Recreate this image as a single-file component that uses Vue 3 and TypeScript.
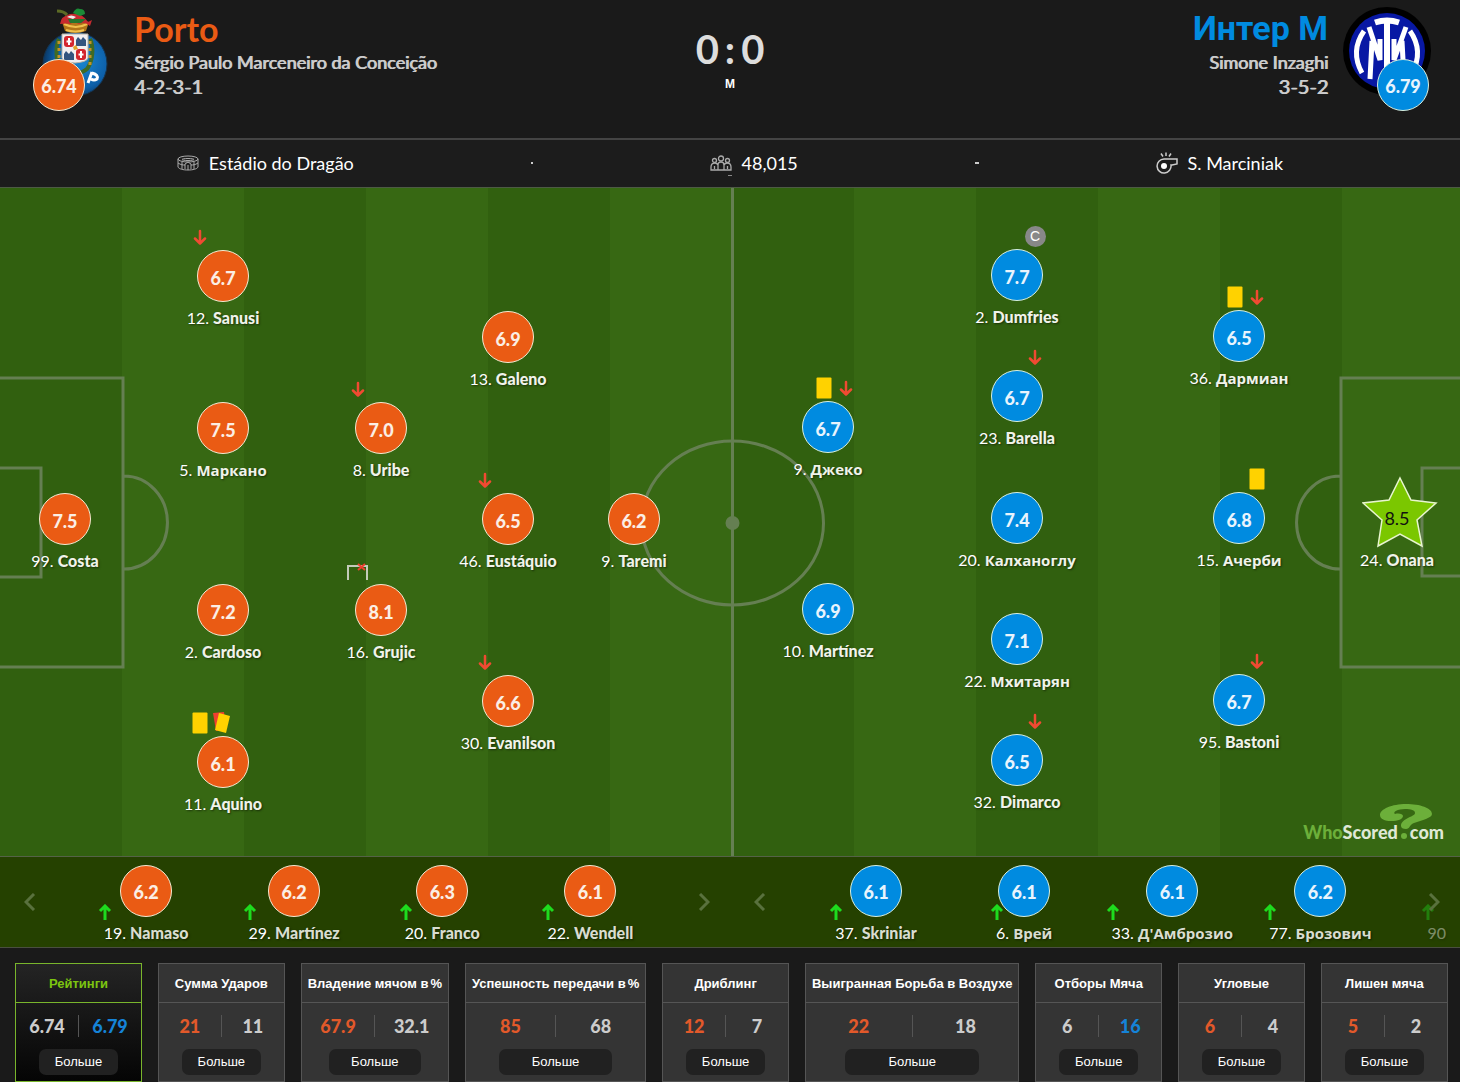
<script setup lang="ts">
type Side = 'home' | 'away'
type Badge = 'off' | 'yellow' | 'second' | 'miss' | 'captain'

interface Player {
  side: Side
  x: number
  y: number
  rating: string
  number: number
  name: string
  badges?: Badge[]
  best?: boolean
}

interface Sub {
  rating: string
  number: number
  name: string
}

interface Bench {
  side: Side
  subs: Sub[]
  nextNumber?: number
}

interface Stat {
  title: string
  percent?: boolean
  home: string
  away: string
}

const PITCH_W = 1460
const PITCH_H = 668

const players: Player[] = [
  { side: 'home', x: 65, y: 331, rating: '7.5', number: 99, name: 'Costa' },
  { side: 'home', x: 223, y: 88, rating: '6.7', number: 12, name: 'Sanusi', badges: ['off'] },
  { side: 'home', x: 223, y: 240, rating: '7.5', number: 5, name: 'Маркано' },
  { side: 'home', x: 223, y: 422, rating: '7.2', number: 2, name: 'Cardoso' },
  { side: 'home', x: 223, y: 574, rating: '6.1', number: 11, name: 'Aquino', badges: ['yellow', 'second'] },
  { side: 'home', x: 381, y: 240, rating: '7.0', number: 8, name: 'Uribe', badges: ['off'] },
  { side: 'home', x: 381, y: 422, rating: '8.1', number: 16, name: 'Grujic', badges: ['miss'] },
  { side: 'home', x: 508, y: 149, rating: '6.9', number: 13, name: 'Galeno' },
  { side: 'home', x: 508, y: 331, rating: '6.5', number: 46, name: 'Eustáquio', badges: ['off'] },
  { side: 'home', x: 508, y: 513, rating: '6.6', number: 30, name: 'Evanilson', badges: ['off'] },
  { side: 'home', x: 634, y: 331, rating: '6.2', number: 9, name: 'Taremi' },
  { side: 'away', x: 828, y: 239, rating: '6.7', number: 9, name: 'Джеко', badges: ['yellow', 'off'] },
  { side: 'away', x: 828, y: 421, rating: '6.9', number: 10, name: 'Martínez' },
  { side: 'away', x: 1017, y: 87, rating: '7.7', number: 2, name: 'Dumfries', badges: ['captain'] },
  { side: 'away', x: 1017, y: 208, rating: '6.7', number: 23, name: 'Barella', badges: ['off'] },
  { side: 'away', x: 1017, y: 330, rating: '7.4', number: 20, name: 'Калханоглу' },
  { side: 'away', x: 1017, y: 451, rating: '7.1', number: 22, name: 'Мхитарян' },
  { side: 'away', x: 1017, y: 572, rating: '6.5', number: 32, name: 'Dimarco', badges: ['off'] },
  { side: 'away', x: 1239, y: 148, rating: '6.5', number: 36, name: 'Дармиан', badges: ['yellow', 'off'] },
  { side: 'away', x: 1239, y: 330, rating: '6.8', number: 15, name: 'Ачерби', badges: ['yellow'] },
  { side: 'away', x: 1239, y: 512, rating: '6.7', number: 95, name: 'Bastoni', badges: ['off'] },
  { side: 'away', x: 1397, y: 330, rating: '8.5', number: 24, name: 'Onana', best: true },
]

const benches: Bench[] = [
  {
    side: 'home',
    subs: [
      { rating: '6.2', number: 19, name: 'Namaso' },
      { rating: '6.2', number: 29, name: 'Martínez' },
      { rating: '6.3', number: 20, name: 'Franco' },
      { rating: '6.1', number: 22, name: 'Wendell' },
    ],
  },
  {
    side: 'away',
    subs: [
      { rating: '6.1', number: 37, name: 'Skriniar' },
      { rating: '6.1', number: 6, name: 'Врей' },
      { rating: '6.1', number: 33, name: "Д'Амброзио" },
      { rating: '6.2', number: 77, name: 'Брозович' },
    ],
    nextNumber: 90,
  },
]

const stats: Stat[] = [
  { title: 'Рейтинги', home: '6.74', away: '6.79' },
  { title: 'Сумма Ударов', home: '21', away: '11' },
  { title: 'Владение мячом в', percent: true, home: '67.9', away: '32.1' },
  { title: 'Успешность передачи в', percent: true, home: '85', away: '68' },
  { title: 'Дриблинг', home: '12', away: '7' },
  { title: 'Выигранная Борьба в Воздухе', home: '22', away: '18' },
  { title: 'Отборы Мяча', home: '6', away: '16' },
  { title: 'Угловые', home: '6', away: '4' },
  { title: 'Лишен мяча', home: '5', away: '2' },
]

const place = (p: Player) => ({
  left: `${(p.x / PITCH_W) * 100}%`,
  top: `${(p.y / PITCH_H) * 100}%`,
})

const isCyrillic = (s: string) => /[А-я]/.test(s)
</script>

<template>
  <div class="match">
    <header class="teams">
      <div class="team home">
        <div class="crest">
          <svg width="90" height="92" viewBox="0 0 90 92" aria-label="FC Porto">
            <defs>
              <radialGradient id="ball" cx="60%" cy="45%" r="60%">
                <stop offset="0" stop-color="#1a86cf" />
                <stop offset="0.7" stop-color="#0d5fa8" />
                <stop offset="1" stop-color="#0a3560" />
              </radialGradient>
            </defs>
            <circle cx="52" cy="57" r="32" fill="url(#ball)" stroke="#15344f" />
            <path d="M36 32c-4 8-3 22 1 30M67 32c4 8 3 22-3 30q-6 5-11 3" fill="none" stroke="#3f6a24" stroke-width="4" />
            <path d="M36 34v26M67 34v24" stroke="#c29328" stroke-width="3" stroke-dasharray="3 4" fill="none" />
            <path d="M39 27h26v24q-1 4-13 5-12-1-13-5z" fill="#f1eff0" stroke="#b9b2a6" />
            <rect x="41" y="29" width="10" height="11" rx="3" fill="#d3262e" />
            <rect x="53" y="42" width="10" height="11" rx="3" fill="#d3262e" />
            <path d="M46 31v7M43.500 34.500h5M58 44v7M55.500 47.500h5" stroke="#fff" stroke-width="2" />
            <path d="M53 39v-6l2-3 3 3 2-3 3 3v6zM41 53v-6l2-3 3 3 2-3 3 3v6z" fill="#33547f" />
            <path d="M50 40l3-2 2 4-4 1z" fill="#e0a326" />
            <path d="M39 15q13-5 27 0l-3 9q-11 4-21 0z" fill="#b27519" />
            <path d="M41 17q12 6 23 0M43 23q10 3 18 0" stroke="#f0c04d" stroke-width="2" fill="none" />
            <path d="M37 17q1-8 10-10 12-2 18 8l4-2-2 6q-5-5-11-2-5-3-9 0-4-1-10 0z" fill="#c62a2f" />
            <path d="M45 12h18l-5 4H47z" fill="#24752f" />
            <path d="M44 10q4-3 9 0l-3 2z" fill="#eee" />
            <path d="M34 4q7 0 10 4" stroke="#5c6a25" stroke-width="3" fill="none" />
            <path d="M50 6q3-6 7-4 5 0 5 5l-5 2z" fill="#1b8c37" />
            <path d="M65 76l4-11M69 66q7 2 5 6-3 2-6 0" stroke="#fff" stroke-width="3" fill="none" />
          </svg>
          <span class="disc home">6.74</span>
        </div>
        <div class="who">
          <h1>Porto</h1>
          <p>Sérgio Paulo Marceneiro da Conceição</p>
          <p class="formation">4-2-3-1</p>
        </div>
      </div>
      <div class="score">
        <strong>0<i>:</i>0</strong>
        <small>М</small>
      </div>
      <div class="team away">
        <div class="who">
          <h1>Интер М</h1>
          <p>Simone Inzaghi</p>
          <p class="formation">3-5-2</p>
        </div>
        <div class="crest">
          <svg width="90" height="92" viewBox="0 0 90 92" aria-label="Inter">
            <circle cx="45" cy="44" r="44" fill="#000" />
            <circle cx="45" cy="44" r="38" fill="#0818a4" />
            <g fill="none" stroke="#fff">
              <path d="M22 24q-14 20-2 42" stroke-width="5" />
              <path d="M68 24q14 20 2 42" stroke-width="5" />
              <path d="M33 15.500q12-4 24 0" stroke-width="6" />
              <path d="M45 14v60" stroke-width="6" />
              <path d="M27 20l11 33V32M30 34l-2 38" stroke-width="5" />
              <path d="M64 20L52 53V32M60 34l2 38" stroke-width="5" />
            </g>
          </svg>
          <span class="disc away">6.79</span>
        </div>
      </div>
    </header>

    <div class="info">
      <div class="fact">
        <svg width="22" height="16" viewBox="0 0 22 16" fill="none" stroke="#aaa">
          <ellipse cx="11" cy="4" rx="10" ry="3" />
          <ellipse cx="11" cy="4.500" rx="6" ry="1" />
          <path d="M1 4v8c1 2 5 3 10 3s9-1 10-3V4M1 8c3 2 5 2 7 2M21 8c-3 2-5 2-7 2M5 7v7M17 7v7M8 14V9l3-2 3 2v5M11 10v5" />
        </svg>
        <span>Estádio do Dragão</span>
      </div>
      <i class="dot"></i>
      <div class="fact">
        <svg width="22" height="16" viewBox="0 0 22 16" fill="none" stroke="#aaa" stroke-width="1.300">
          <circle cx="11" cy="3.500" r="2.500" />
          <circle cx="4.500" cy="5.500" r="2" />
          <circle cx="17.500" cy="5.500" r="2" />
          <path d="M8 15v-5q0-3 3-3t3 3v5zM8 15H1v-3q0-4 4-4 2 0 3 2M14 15h7v-3q0-4-4-4-2 0-3 2M4.500 11v3M17.500 11v3" />
        </svg>
        <span>48,015</span>
        <i class="tick"></i>
      </div>
      <i class="dot wide"></i>
      <div class="fact">
        <svg width="22" height="22" viewBox="0 0 22 22" fill="none" stroke="#ccc" stroke-width="1.500">
          <path d="M8 7h13v5l-5 1-1 0a7 7 0 1 1-7-6z" />
          <circle cx="8" cy="14" r="3" fill="#fff" stroke="none" />
          <path d="M5 1.500l2 3M10 .5v3.500M15 1.500l-2 3" />
        </svg>
        <span>S. Marciniak</span>
      </div>
    </div>

    <section class="pitch">
      <svg class="field" viewBox="0 0 1460 668" preserveAspectRatio="none">
        <rect width="1460" height="668" fill="#376813" />
        <rect v-for="n in 6" :key="n" :x="(n - 1) * 244" width="122" height="668" fill="#31600f" />
        <g fill="none" stroke="#657f52" stroke-width="3">
          <path d="M732.500 0V668" />
          <ellipse cx="732.500" cy="335" rx="91" ry="82" />
          <path d="M0 190H123V479H0M0 280H41V389H0M124 288A43 46 0 0 1 124 381" />
          <path d="M1460 190H1341V479H1460M1460 280H1422V388H1460M1340 288A43 46 0 0 0 1340 381" />
        </g>
        <circle cx="732.500" cy="335" r="7" fill="#657f52" />
      </svg>

      <div v-for="p in players" :key="p.side + p.number" class="player" :class="p.side" :style="place(p)">
        <div v-if="p.badges" class="badges">
          <span v-for="b in p.badges" :key="b" class="badge">
            <svg v-if="b === 'off'" width="14" height="16" viewBox="0 0 14 16" fill="none" stroke="#f04a32" stroke-width="2.500" stroke-linecap="round" stroke-linejoin="round">
              <path d="M7 2v12M2 9.500l5 5 5-5" />
            </svg>
            <svg v-else-if="b === 'yellow'" width="16" height="22" viewBox="0 0 16 22">
              <rect x="0.500" y="0.500" width="15" height="21" rx="1" fill="#ffd200" />
            </svg>
            <svg v-else-if="b === 'second'" width="18" height="22" viewBox="0 0 18 22">
              <path d="M0 1l11-1 2 18-10 1z" fill="#ef3f2f" />
              <path d="M6 1l11 3-4 17-11-3z" fill="#ffd200" />
            </svg>
            <svg v-else-if="b === 'miss'" width="22" height="18" viewBox="0 0 22 18" fill="none">
              <path d="M1 18V4h19v14" stroke="#c3cbb9" stroke-width="2" />
              <path d="M11 2l7 6M18 2l-7 6" stroke="#ef3f2f" stroke-width="2" />
            </svg>
            <b v-else class="captain">C</b>
          </span>
        </div>
        <div v-if="p.best" class="star">
          <svg width="76" height="72" viewBox="0 0 76 72">
            <path d="M38 2L49 24 74 27 55 44 60 70 38 58 16 70 20 44 1 27 27 24z" fill="#7bc700" stroke="#e8f5cf" stroke-width="1.500" />
          </svg>
          <span>{{ p.rating }}</span>
        </div>
        <div v-else class="disc" :class="p.side">{{ p.rating }}</div>
        <a href="#" class="label"><span>{{ p.number }}.</span>&nbsp;<b :class="{ cyr: isCyrillic(p.name) }">{{ p.name }}</b></a>
      </div>

      <div class="brand">
        <svg width="52" height="26" viewBox="0 0 52 26" fill="#6caf3a">
          <path d="M26 0C12 0 0 5 0 11c0 4 5 6 11 6 7 0 12-2 12-5 0-2-4-3-8-2-3-2 3-5 10-5 6 0 10 1 10 4 0 4-14 5-14 13 0 2 2 3 5 3 4 0 3-4 8-6 8-3 18-5 18-9C52 4 40 0 26 0z" />
        </svg>
        <span><em>Who</em>Scored<i></i>com</span>
      </div>
    </section>

    <section class="benches">
      <div v-for="bench in benches" :key="bench.side" class="bench">
        <button type="button" class="nav prev">
          <svg width="12" height="18" viewBox="0 0 12 18"><path d="M10 1L2 9l8 8" /></svg>
        </button>
        <ul>
          <li v-for="s in bench.subs" :key="s.number">
            <div class="disc" :class="bench.side">{{ s.rating }}</div>
            <a href="#" class="label">
              <svg class="on" width="14" height="17" viewBox="0 0 14 17"><path d="M7 16V2M2 7l5-5 5 5" /></svg>
              <span>{{ s.number }}.</span>&nbsp;<b :class="{ cyr: isCyrillic(s.name) }">{{ s.name }}</b>
            </a>
          </li>
          <li v-if="bench.nextNumber" class="peek">
            <a href="#" class="label">
              <svg class="on" width="14" height="17" viewBox="0 0 14 17"><path d="M7 16V2M2 7l5-5 5 5" /></svg>
              <span>{{ bench.nextNumber }}</span>
            </a>
          </li>
        </ul>
        <button type="button" class="nav next">
          <svg width="12" height="18" viewBox="0 0 12 18"><path d="M2 1l8 8-8 8" /></svg>
        </button>
      </div>
    </section>

    <section class="stats">
      <article v-for="(s, i) in stats" :key="s.title" class="stat" :class="{ active: i === 0 }">
        <h2>{{ s.title }}<span v-if="s.percent">%</span></h2>
        <div class="values">
          <span :class="{ 'lead-home': +s.home > +s.away }">{{ s.home }}</span>
          <span :class="{ 'lead-away': +s.away > +s.home }">{{ s.away }}</span>
        </div>
        <button type="button">Больше</button>
      </article>
    </section>
  </div>
</template>

<style>
body {
  margin: 0;
  background: #1a1a1a;
}
</style>

<style scoped>
.match {
  overflow: hidden;
  background: #1a1a1a;
  color: #fff;
  font-family: Lato, "Open Sans", sans-serif;
  font-size: 16px;
}

h1,
h2,
p,
ul {
  margin: 0;
  padding: 0;
}

a {
  color: inherit;
  text-decoration: none;
}

.disc {
  display: flex;
  align-items: center;
  justify-content: center;
  box-sizing: border-box;
  width: 52px;
  height: 52px;
  padding-top: 1px;
  border: 1px solid #f3ead2;
  border-radius: 50%;
  font-size: 18px;
  font-weight: 900;
  color: #fbeee4;
}

.disc.home {
  background: #ea5b14;
}

.disc.away {
  background: #008be0;
  border-color: #d8efdf;
  color: #e8f4fd;
}

/* Team header */
.teams {
  display: grid;
  grid-template-columns: 1fr auto 1fr;
  box-sizing: border-box;
  height: 138px;
  padding: 7px 28px 0;
}

.team {
  display: flex;
  gap: 16px;
}

.team.away {
  gap: 14px;
  justify-content: flex-end;
  text-align: right;
}

.crest {
  position: relative;
  width: 90px;
}

.crest svg {
  display: block;
}

.home .crest svg {
  margin-left: -5px;
}

.crest .disc {
  position: absolute;
  top: 52px;
}

.crest .disc.home {
  left: 5px;
}

.crest .disc.away {
  right: 3px;
}

h1 {
  font-size: 34px;
  font-weight: 700;
  line-height: 43px;
}

.home h1 {
  color: #ea5b14;
}

.away h1 {
  color: #008be0;
  font-family: Roboto, sans-serif;
}

.who p {
  color: #ccc;
  font-size: 18px;
  line-height: 24px;
  text-shadow: 1px 0 #ccc;
}

.who .formation {
  font-size: 20px;
}

.score {
  display: flex;
  flex-direction: column;
  align-items: center;
  padding-top: 18px;
}

.score strong {
  display: flex;
  gap: 6px;
  font-size: 40px;
  line-height: 48px;
  color: #ddd;
}

.score i {
  font-style: normal;
}

.score small {
  font: 700 12px/22px "Liberation Sans", sans-serif;
}

/* Venue, attendance, referee */
.info {
  display: flex;
  align-items: center;
  justify-content: space-evenly;
  box-sizing: border-box;
  height: 50px;
  padding-bottom: 2px;
  border-top: 2px solid #444;
  border-bottom: 1px solid #4d5a44;
  background: #1c1c1c;
}

.fact {
  position: relative;
  display: flex;
  align-items: center;
  gap: 10px;
  font-size: 18px;
  line-height: 24px;
}

.dot {
  width: 2px;
  height: 2px;
  background: #ccc;
}

.dot.wide {
  width: 4px;
}

.tick {
  position: absolute;
  bottom: -1px;
  left: 18px;
  width: 4px;
  height: 1px;
  background: #888;
}

/* Pitch */
.pitch {
  position: relative;
  aspect-ratio: 1460 / 668;
}

.field {
  display: block;
  width: 100%;
  height: 100%;
}

.player {
  position: absolute;
  display: flex;
  flex-direction: column;
  align-items: center;
  gap: 4px;
  width: 160px;
  margin: -26px 0 0 -80px;
}

.player .disc {
  padding-top: 3px;
}

.label {
  position: relative;
  font-size: 16px;
  line-height: 24px;
  white-space: nowrap;
  text-shadow: 1px 1px 2px rgba(0, 0, 0, 0.5);
}

.label b {
  color: #f0f3ea;
  font-weight: 900;
}

.label .cyr {
  font-family: "Open Sans", sans-serif;
  font-size: 15px;
  font-weight: 700;
}

.badges {
  position: absolute;
  top: -24px;
  display: flex;
}

.home .badges {
  left: 46px;
}

.away .badges {
  right: 51px;
}

.badge {
  display: flex;
  align-items: center;
  justify-content: center;
  width: 22px;
  height: 22px;
}

.captain {
  width: 21px;
  border-radius: 50%;
  background: #888;
  font: 400 14px/21px "Liberation Sans", sans-serif;
  text-align: center;
}

.star {
  position: relative;
  display: flex;
  align-items: center;
  justify-content: center;
  width: 52px;
  height: 52px;
  font-size: 18px;
  color: #111;
}

.star svg {
  position: absolute;
  top: -16px;
  left: -9px;
}

.star span {
  position: relative;
}

.brand {
  position: absolute;
  right: 16px;
  bottom: 12px;
  font-size: 18px;
  font-weight: 900;
  line-height: 24px;
  color: #dfe8d6;
}

.brand svg {
  position: absolute;
  top: -16px;
  right: 12px;
}

.brand span {
  position: relative;
}

.brand em {
  font-style: normal;
  color: #6caf3a;
}

.brand i {
  display: inline-block;
  width: 6px;
  height: 6px;
  margin: 0 3px;
  border-radius: 50%;
  background: #6caf3a;
}

/* Benches */
.benches {
  display: grid;
  grid-template-columns: 1fr 1fr;
  border-top: 1px solid #556247;
  border-bottom: 1px solid #4a4f40;
  background: #254100;
}

.bench {
  position: relative;
  display: flex;
  padding-right: 14px;
}

.bench ul {
  display: flex;
  flex: 1;
  list-style: none;
}

.bench li {
  display: flex;
  flex: 0 0 23%;
  flex-direction: column;
  align-items: center;
  gap: 4px;
  padding: 8px 0 2px;
}

.bench .peek {
  flex: 1;
  align-items: flex-end;
  justify-content: flex-end;
  opacity: 0.4;
}

.bench .label b {
  color: #d9ddd0;
}

.on {
  position: absolute;
  top: -17px;
  left: -6px;
  fill: none;
  stroke: #1edb1e;
  stroke-width: 3;
}

.nav {
  padding: 0;
  border: 0;
  background: none;
}

.nav svg {
  display: block;
  fill: none;
  stroke: #59713d;
  stroke-width: 3;
}

.prev {
  width: 72px;
  padding-left: 24px;
}

.next {
  position: absolute;
  top: 0;
  right: 20px;
  bottom: 0;
}

/* Stat cards */
.stats {
  display: flex;
  justify-content: space-between;
  padding: 15px 12px 0 15px;
}

.stat {
  display: flex;
  flex-direction: column;
  align-items: center;
  box-sizing: border-box;
  min-width: 127px;
  padding-bottom: 6px;
  border: 1px solid #555;
  background: #343434;
}

.stat h2 {
  align-self: stretch;
  padding: 1px 6px 0;
  border-bottom: 1px solid #555;
  font: 700 13px/37px "Liberation Sans", sans-serif;
  text-align: center;
  white-space: nowrap;
}

.stat h2 span {
  margin-left: 2px;
}

.values {
  display: flex;
  align-self: stretch;
  margin: 12px 0;
}

.values span {
  flex: 1;
  color: #ccc;
  font-size: 18px;
  font-weight: 900;
  line-height: 22px;
  text-align: center;
}

.values span + span {
  border-left: 1px solid #555;
}

.values .lead-home {
  color: #e2592a;
}

.values .lead-away {
  color: #1583d8;
}

.stat button {
  width: 63%;
  padding: 0;
  border: 0;
  border-radius: 7px;
  background: #212121;
  color: #fff;
  font: 400 13px/26px "Liberation Sans", sans-serif;
}

.stat.active {
  border-color: #79b52c;
  background: linear-gradient(#242424, #050505);
}

.stat.active h2 {
  border-color: #79b52c;
  color: #7cc510;
}
</style>
